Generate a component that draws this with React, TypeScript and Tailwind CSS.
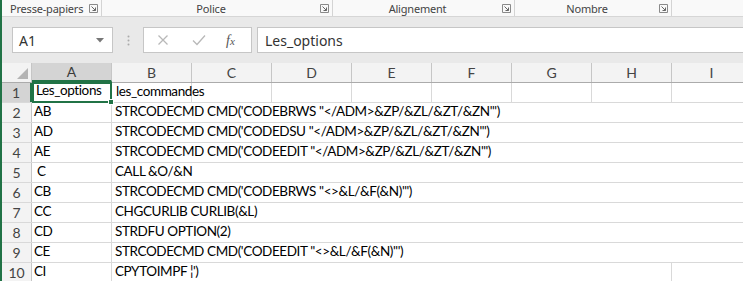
import React from "react"

const COLS = ["A", "B", "C", "D", "E", "F", "G", "H", "I"]

const ROWS: [string, string][] = [
  ["Les_options", "les_commandes"],
  ["AB", "STRCODECMD CMD('CODEBRWS \"</ADM>&ZP/&ZL/&ZT/&ZN\"')"],
  ["AD", "STRCODECMD CMD('CODEDSU \"</ADM>&ZP/&ZL/&ZT/&ZN\"')"],
  ["AE", "STRCODECMD CMD('CODEEDIT \"</ADM>&ZP/&ZL/&ZT/&ZN\"')"],
  ["\u00a0C", "CALL &O/&N"],
  ["CB", "STRCODECMD CMD('CODEBRWS \"<>&L/&F(&N)\"')"],
  ["CC", "CHGCURLIB CURLIB(&L)"],
  ["CD", "STRDFU OPTION(2)"],
  ["CE", "STRCODECMD CMD('CODEEDIT \"<>&L/&F(&N)\"')"],
  ["CI", "CPYTOIMPF \u00a6')"],
]

const ui = { fontFamily: '"Noto Sans", "Open Sans", sans-serif' }
const cell = { fontFamily: 'Lato, "Noto Sans", sans-serif' }

// ribbon group launcher (small box with a diagonal arrow)
function Launcher() {
  return (
    <svg width="9" height="9" viewBox="0 0 9 9" className="shrink-0">
      <path d="M0.5 0.5 H8.5 V8.5" fill="none" stroke="#8a8a8a" />
      <path d="M0.5 0.5 V8.5 H8.5" fill="none" stroke="#8a8a8a" />
      <path d="M2.5 2.5 L6.5 6.5 M6.5 3.5 V6.5 H3.5" fill="none" stroke="#666" />
    </svg>
  )
}

function Group({ label, width, center }: { label: string; width: string; center?: boolean }) {
  return (
    <div className={`${width} h-full flex items-center border-r border-[#d4d4d4] pr-[3px]`}>
      <div className={`flex-1 whitespace-nowrap text-[11px] tracking-[-0.2px] text-[#444] leading-none ${center ? "text-center" : "pl-[8px]"}`}>
        {label}
      </div>
      <Launcher />
    </div>
  )
}

export default function App() {
  return (
    <div className="w-[743px] h-[281px] overflow-hidden bg-white border-l-2 border-[#217346]">
      {/* ribbon group labels */}
      <div className="h-[17px] flex bg-[#f9f9f9] border-b border-[#d6d6d6]" style={ui}>
        <Group label="Presse-papiers" width="w-[100px]" />
        <Group label="Police" width="w-[231px]" center />
        <Group label="Alignement" width="w-[182px]" center />
        <Group label="Nombre" width="w-[157px]" center />
      </div>

      {/* formula bar */}
      <div className="h-[46px] bg-[#e9e9e9] pt-[10px] pb-[10px] flex" style={ui}>
        <div className="ml-[10px] w-[101px] h-[26px] bg-white border border-[#c6c6c6] flex items-center pl-[6px] pr-[8px]">
          <span className="flex-1 text-[14px] text-[#333]">A1</span>
          <svg width="8" height="5" viewBox="0 0 8 5">
            <path d="M0 0 H8 L4 4.5 Z" fill="#777" />
          </svg>
        </div>
        <div className="w-[30px] flex items-center justify-center">
          <svg width="3" height="11" viewBox="0 0 3 11">
            <circle cx="1.5" cy="1.5" r="1" fill="#aaa" />
            <circle cx="1.5" cy="5.5" r="1" fill="#aaa" />
            <circle cx="1.5" cy="9.5" r="1" fill="#aaa" />
          </svg>
        </div>
        <div className="w-[109px] h-[26px] bg-white border border-[#c6c6c6] flex items-center">
          <svg width="12" height="12" viewBox="0 0 12 12" className="ml-[13px]">
            <path d="M1.5 1.5 L10.5 10.5 M10.5 1.5 L1.5 10.5" stroke="#b8b8b8" strokeWidth="1.3" />
          </svg>
          <svg width="14" height="12" viewBox="0 0 14 12" className="ml-[23px]">
            <path d="M1 6.5 L5 10.5 L13 1.5" fill="none" stroke="#b8b8b8" strokeWidth="1.3" />
          </svg>
          <span className="ml-[20px] text-[14px] italic text-[#555]" style={{ fontFamily: '"Liberation Serif", serif' }}>
            f<span className="text-[11px]">x</span>
          </span>
        </div>
        <div className="ml-[5px] flex-1 h-[26px] bg-white border border-[#c6c6c6] border-r-0 flex items-center pl-[7px] text-[14px] text-[#333]">
          Les_options
        </div>
      </div>

      {/* column headers */}
      <div className="h-[20px] flex bg-[#f3f3f3] border-b border-[#ababab]" style={cell}>
        <div className="w-[30px] shrink-0 border-r border-[#c6c6c6] relative">
          <svg width="11" height="11" viewBox="0 0 11 11" className="absolute right-[3px] bottom-[3px]">
            <path d="M11 0 V11 H0 Z" fill="#b4b4b4" />
          </svg>
        </div>
        {COLS.map((c, i) => (
          <div
            key={c}
            className={`w-[80px] shrink-0 flex items-center justify-center text-[14px] border-r border-[#c6c6c6] ${
              i === 0 ? "bg-[#d4d4d4] text-[#3b3b3b] border-b-2 border-b-[#217346]" : "text-[#444]"
            }`}
          >
            {c}
          </div>
        ))}
      </div>

      {/* rows */}
      {ROWS.map(([a, b], r) => (
        <div key={r} className="h-[20px] flex border-b border-[#d9d9d9] text-[13.5px] tracking-[-0.4px] text-black" style={cell}>
          <div
            className={`w-[30px] shrink-0 flex items-center justify-center text-[14px] tracking-normal text-[#444] ${
              r === 0 ? "bg-[#d4d4d4] border-r-2 border-[#217346]" : "bg-[#f3f3f3] border-r border-[#c6c6c6]"
            }`}
          >
            {r + 1}
          </div>
          <div
            className={`w-[80px] shrink-0 flex items-end pl-[2px] pb-[1px] whitespace-nowrap ${
              r === 0 ? "border-2 border-[#217346] relative -mt-px h-[21px]" : "border-r border-[#d9d9d9]"
            }`}
          >
            {a}
            {r === 0 && <div className="absolute -right-[4px] -bottom-[4px] w-[6px] h-[6px] bg-[#217346] border border-white" />}
          </div>
          {r === 0 ? (
            <>
              <div className="w-[80px] shrink-0 flex items-end pl-[4px] pb-[1px] whitespace-nowrap border-r border-[#d9d9d9]">{b}</div>
              {COLS.slice(2).map((c) => (
                <div key={c} className="w-[80px] shrink-0 border-r border-[#d9d9d9]" />
              ))}
            </>
          ) : (
            <div className={`flex items-end pl-[3px] pb-[1px] whitespace-nowrap ${r === 9 ? "w-[560px] border-r border-[#d9d9d9]" : "flex-1"}`}>
              {b}
            </div>
          )}
        </div>
      ))}
    </div>
  )
}
